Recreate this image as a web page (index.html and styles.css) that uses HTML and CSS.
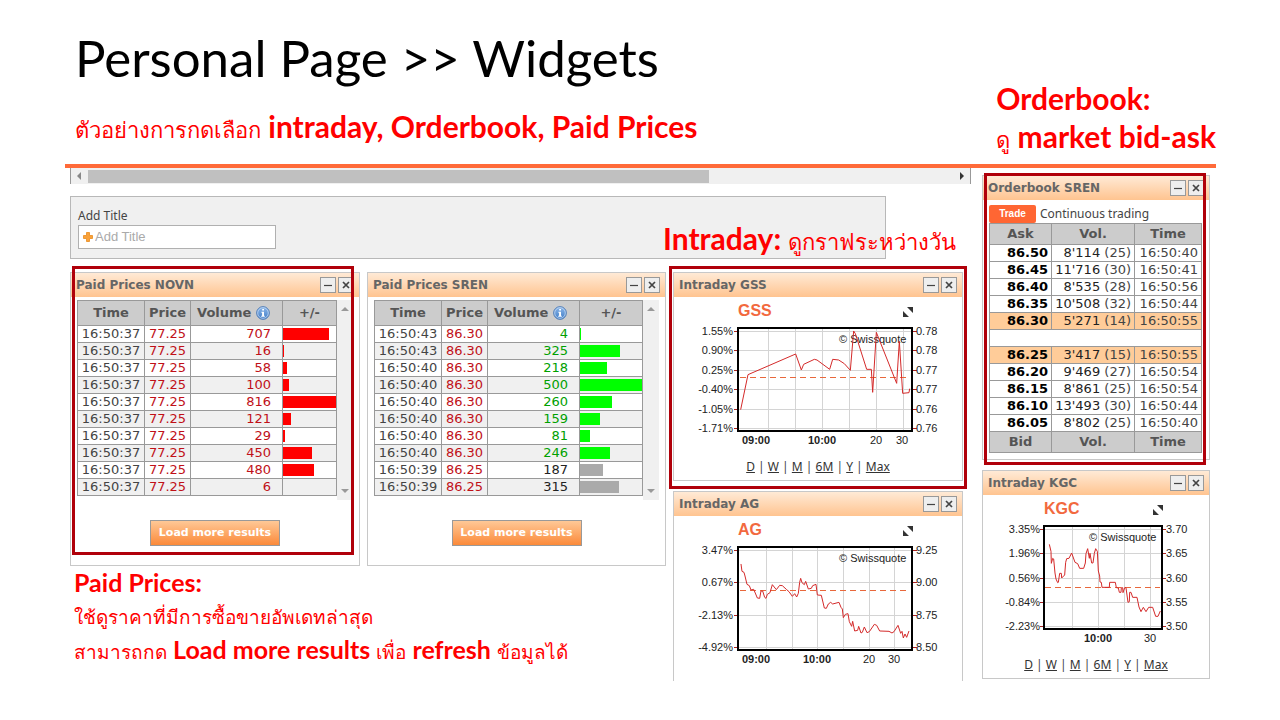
FILE: index.html
```html
<!DOCTYPE html>
<html lang="th">
<head>
<meta charset="utf-8">
<title>Personal Page &gt;&gt; Widgets</title>
<link rel="stylesheet" href="styles.css">
</head>
<body>
<svg class="defs" width="0" height="0" aria-hidden="true">
  <defs>
    <linearGradient id="blue" x1="0" y1="0" x2="0" y2="1"><stop offset="0" stop-color="#8db8ea"/><stop offset="1" stop-color="#3f7cc6"/></linearGradient>
    <symbol id="info" viewBox="0 0 14 14"><circle cx="7" cy="7" r="6.4" fill="url(#blue)" stroke="#5a83b8"/><circle cx="7" cy="7" r="5.3" fill="none" stroke="#cfe0f5" stroke-width=".7"/><path d="M6.2 3h1.8v1.6H6.2zM5.4 5.7H8v4.1h.8v1H5.2v-1h.9V6.7h-.7z" fill="#fff"/></symbol>
    <symbol id="min" viewBox="0 0 14 14"><path d="M3 7.5h8" stroke="#444" stroke-width="1.2"/></symbol>
    <symbol id="close" viewBox="0 0 14 14"><path d="M4 4l6 6M10 4l-6 6" stroke="#444" stroke-width="1.7"/></symbol>
  </defs>
</svg>
<main class="slide">
  <header class="head">
    <div class="titles">
      <h1>Personal Page &gt;&gt; Widgets</h1>
      <p class="note"><span class="th">ตัวอย่างการกดเลือก</span> intraday, Orderbook, Paid Prices</p>
    </div>
    <p class="note side-note">Orderbook:<br><span class="th">ดู</span> market bid-ask</p>
  </header>

  <div class="board">
    <div class="left">
      <div class="scroll"><span class="arrow left-arrow"></span><span class="thumb"></span><span class="arrow right-arrow"></span></div>
      <div class="add">
        <label for="add-title">Add Title</label>
        <div class="field">
          <svg width="10" height="10" viewBox="0 0 10 10"><path d="M3.5.5h3v3h3v3h-3v3h-3v-3h-3v-3h3z" fill="#f9a13a" stroke="#e88a1c" stroke-width=".8"/></svg>
          <input id="add-title" type="text" placeholder="Add Title">
        </div>
        <p class="note intraday-note">Intraday: <span class="th">ดูกราฟระหว่างวัน</span></p>
      </div>

      <div class="columns">
        <div class="prices">
          <section class="panel marked mark-novn">
            <div class="bar"><h2>Paid Prices NOVN</h2><button aria-label="Minimize"><svg><use href="#min"/></svg></button><button aria-label="Close"><svg><use href="#close"/></svg></button></div>
            <div class="list">
              <table class="paid down">
                <thead><tr><th class="c-time">Time</th><th class="c-price">Price</th><th class="c-vol">Volume <svg class="info"><use href="#info"/></svg></th><th>+/-</th></tr></thead>
                <tbody>
                  <tr><td>16:50:37</td><td>77.25</td><td>707</td><td><i style="width:86%"></i></td></tr>
                  <tr><td>16:50:37</td><td>77.25</td><td>16</td><td><i style="width:2%"></i></td></tr>
                  <tr><td>16:50:37</td><td>77.25</td><td>58</td><td><i style="width:8%"></i></td></tr>
                  <tr><td>16:50:37</td><td>77.25</td><td>100</td><td><i style="width:12%"></i></td></tr>
                  <tr><td>16:50:37</td><td>77.25</td><td>816</td><td><i style="width:100%"></i></td></tr>
                  <tr><td>16:50:37</td><td>77.25</td><td>121</td><td><i style="width:15%"></i></td></tr>
                  <tr><td>16:50:37</td><td>77.25</td><td>29</td><td><i style="width:4%"></i></td></tr>
                  <tr><td>16:50:37</td><td>77.25</td><td>450</td><td><i style="width:55%"></i></td></tr>
                  <tr><td>16:50:37</td><td>77.25</td><td>480</td><td><i style="width:59%"></i></td></tr>
                  <tr><td>16:50:37</td><td>77.25</td><td>6</td><td></td></tr>
                </tbody>
              </table>
              <div class="vscroll"><span class="up-arrow"></span><span class="down-arrow"></span></div>
            </div>
            <button class="more">Load more results</button>
          </section>

          <section class="panel">
            <div class="bar"><h2>Paid Prices SREN</h2><button aria-label="Minimize"><svg><use href="#min"/></svg></button><button aria-label="Close"><svg><use href="#close"/></svg></button></div>
            <div class="list">
              <table class="paid up">
                <thead><tr><th class="c-time">Time</th><th class="c-price">Price</th><th class="c-vol">Volume <svg class="info"><use href="#info"/></svg></th><th>+/-</th></tr></thead>
                <tbody>
                  <tr><td>16:50:43</td><td>86.30</td><td>4</td><td><i style="width:2%"></i></td></tr>
                  <tr><td>16:50:43</td><td>86.30</td><td>325</td><td><i style="width:65%"></i></td></tr>
                  <tr><td>16:50:40</td><td>86.30</td><td>218</td><td><i style="width:44%"></i></td></tr>
                  <tr><td>16:50:40</td><td>86.30</td><td>500</td><td><i style="width:100%"></i></td></tr>
                  <tr><td>16:50:40</td><td>86.30</td><td>260</td><td><i style="width:52%"></i></td></tr>
                  <tr><td>16:50:40</td><td>86.30</td><td>159</td><td><i style="width:32%"></i></td></tr>
                  <tr><td>16:50:40</td><td>86.30</td><td>81</td><td><i style="width:16%"></i></td></tr>
                  <tr><td>16:50:40</td><td>86.30</td><td>246</td><td><i style="width:49%"></i></td></tr>
                  <tr class="flat"><td>16:50:39</td><td>86.25</td><td>187</td><td><i style="width:37%"></i></td></tr>
                  <tr class="flat"><td>16:50:39</td><td>86.25</td><td>315</td><td><i style="width:63%"></i></td></tr>
                </tbody>
              </table>
              <div class="vscroll"><span class="up-arrow"></span><span class="down-arrow"></span></div>
            </div>
            <button class="more">Load more results</button>
          </section>

          <div class="paid-note">
            <p class="note">Paid Prices:</p>
            <p class="note small"><span class="th">ใช้ดูราคาที่มีการซื้อขายอัพเดทล่าสุด</span></p>
            <p class="note small"><span class="th">สามารถกด</span> Load more results <span class="th">เพื่อ</span> refresh <span class="th">ข้อมูลได้</span></p>
          </div>
        </div>

        <div class="stack">
          <section class="panel marked mark-gss">
            <div class="bar"><h2>Intraday GSS</h2><button aria-label="Minimize"><svg><use href="#min"/></svg></button><button aria-label="Close"><svg><use href="#close"/></svg></button></div>
            <svg class="chart" viewBox="0 0 288 154">
              <text class="sym" x="64" y="19">GSS</text>
              <path class="expand" d="M233 10h6v6zM229 14v6h6z"/>
              <path class="grid" d="M64 34.500h175M64 53.500h175M64 73.500h175M64 92.500h175M64 112.500h175M64 131.500h175M94.500 31v103M121.500 31v103M148.500 31v103M175.500 31v103M202.500 31v103M229.500 31v103"/>
              <path class="tick" d="M60 34.500h4M60 53.500h4M60 73.500h4M60 92.500h4M60 112.500h4M60 131.500h4M239 34.500h4M239 53.500h4M239 73.500h4M239 92.500h4M239 112.500h4M239 131.500h4"/>
              <path class="base" d="M66 80.500h169"/>
              <text class="ax" x="165" y="46">© Swissquote</text>
              <g transform="scale(.33333) translate(-27 -24)"><path class="line" d="M227 362L249 257L392 195L409 243L416 226L448 211L456 213L494 241L503 211L521 213L538 224L556 244L566 126L571 134L605 241L619 241L623 310L634 130L695 283L703 157L713 313L732 311L734 299"/></g>
              <rect class="frame" x="64" y="31" width="174" height="103"/>
              <g class="ax end"><text x="59" y="38">1.55%</text><text x="59" y="57">0.90%</text><text x="59" y="77">0.25%</text><text x="59" y="96">-0.40%</text><text x="59" y="116">-1.05%</text><text x="59" y="135">-1.71%</text></g>
              <g class="ax"><text x="242" y="38">0.78</text><text x="242" y="57">0.78</text><text x="242" y="77">0.77</text><text x="242" y="96">0.77</text><text x="242" y="116">0.76</text><text x="242" y="135">0.76</text></g>
              <g class="ax mid"><text class="b" x="82" y="147">09:00</text><text class="b" x="148" y="147">10:00</text><text x="202" y="147">20</text><text x="228" y="147">30</text></g>
            </svg>
            <nav class="range"><a href="#">D</a> | <a href="#">W</a> | <a href="#">M</a> | <a href="#">6M</a> | <a href="#">Y</a> | <a href="#">Max</a></nav>
          </section>

          <section class="panel cut">
            <div class="bar"><h2>Intraday AG</h2><button aria-label="Minimize"><svg><use href="#min"/></svg></button><button aria-label="Close"><svg><use href="#close"/></svg></button></div>
            <svg class="chart" viewBox="0 0 288 154">
              <text class="sym" x="64" y="19">AG</text>
              <path class="expand" d="M233 10h6v6zM229 14v6h6z"/>
              <path class="grid" d="M64 34.500h175M64 66.500h175M64 99.500h175M64 131.500h175M92.500 31v103M118.500 31v103M143.500 31v103M169.500 31v103M195.500 31v103M220.500 31v103"/>
              <path class="tick" d="M60 34.500h4M60 66.500h4M60 99.500h4M60 131.500h4M239 34.500h4M239 66.500h4M239 99.500h4M239 131.500h4"/>
              <path class="base" d="M66 74.500h169"/>
              <text class="ax" x="165" y="46">© Swissquote</text>
              <g transform="scale(.33333) translate(-27 -96)"><path class="line" d="M228 240L231 262L237 265L240 276L246 301L253 305L258 318L266 316L272 330L277 342L284 343L288 321L293 321L299 340L303 343L307 331L315 326L322 302L334 317L344 304L352 305L364 316L372 323L382 337L389 329L395 339L400 328L404 295L407 283L411 296L418 302L422 292L430 315L439 313L443 305L453 301L457 333L469 334L478 372L484 373L490 360L497 355L503 360L522 355L528 370L532 375L535 401L541 391L549 389L553 413L560 427L563 412L569 441L578 439L581 427L588 447L592 445L598 429L606 446L613 443L628 421L635 424L644 441L672 442L681 447L687 443L699 424L707 448L711 442L715 462L720 450L725 460L732 441"/></g>
              <rect class="frame" x="64" y="31" width="174" height="103"/>
              <g class="ax end"><text x="59" y="38">3.47%</text><text x="59" y="70">0.67%</text><text x="59" y="103">-2.13%</text><text x="59" y="135">-4.92%</text></g>
              <g class="ax"><text x="242" y="38">9.25</text><text x="242" y="70">9.00</text><text x="242" y="103">8.75</text><text x="242" y="135">8.50</text></g>
              <g class="ax mid"><text class="b" x="82" y="147">09:00</text><text class="b" x="143" y="147">10:00</text><text x="195" y="147">20</text><text x="220" y="147">30</text></g>
            </svg>
          </section>
        </div>
      </div>
    </div>

    <aside class="right">
      <section class="panel marked mark-book">
        <div class="bar"><h2>Orderbook SREN</h2><button aria-label="Minimize"><svg><use href="#min"/></svg></button><button aria-label="Close"><svg><use href="#close"/></svg></button></div>
        <div class="status"><button class="trade">Trade</button><span>Continuous trading</span></div>
        <table class="book">
          <thead><tr><th class="b-price">Ask</th><th class="b-vol">Vol.</th><th>Time</th></tr></thead>
          <tbody>
            <tr><td>86.50</td><td><b>8'114</b> (25)</td><td>16:50:40</td></tr>
            <tr><td>86.45</td><td><b>11'716</b> (30)</td><td>16:50:41</td></tr>
            <tr><td>86.40</td><td><b>8'535</b> (28)</td><td>16:50:56</td></tr>
            <tr><td>86.35</td><td><b>10'508</b> (32)</td><td>16:50:44</td></tr>
            <tr class="best"><td>86.30</td><td><b>5'271</b> (14)</td><td>16:50:55</td></tr>
            <tr><td colspan="3"></td></tr>
            <tr class="best"><td>86.25</td><td><b>3'417</b> (15)</td><td>16:50:55</td></tr>
            <tr><td>86.20</td><td><b>9'469</b> (27)</td><td>16:50:54</td></tr>
            <tr><td>86.15</td><td><b>8'861</b> (25)</td><td>16:50:54</td></tr>
            <tr><td>86.10</td><td><b>13'493</b> (30)</td><td>16:50:44</td></tr>
            <tr><td>86.05</td><td><b>8'802</b> (25)</td><td>16:50:40</td></tr>
          </tbody>
          <tfoot><tr><th>Bid</th><th>Vol.</th><th>Time</th></tr></tfoot>
        </table>
      </section>

      <section class="panel">
        <div class="bar"><h2>Intraday KGC</h2><button aria-label="Minimize"><svg><use href="#min"/></svg></button><button aria-label="Close"><svg><use href="#close"/></svg></button></div>
        <svg class="chart" viewBox="0 0 226 154">
          <text class="sym" x="61" y="19">KGC</text>
          <path class="expand" d="M174 10h6v6zM170 14v6h6z"/>
          <path class="grid" d="M61 34.500h118M61 58.500h118M61 83.500h118M61 107.500h118M61 131.500h118M89.500 31v103M115.500 31v103M141.500 31v103M167.500 31v103"/>
          <path class="tick" d="M57 34.500h4M57 58.500h4M57 83.500h4M57 107.500h4M57 131.500h4M179 34.500h4M179 58.500h4M179 83.500h4M179 107.500h4M179 131.500h4"/>
          <path class="base" d="M62 92.500h115"/>
          <text class="ax" x="106" y="46">© Swissquote</text>
          <g transform="scale(.33333) translate(-24 -93)"><path class="line" d="M223 241L228 262L229 298L233 283L236 285L240 327L243 345L248 356L250 355L254 328L259 328L260 342L269 333L272 295L275 284L282 283L290 267L300 295L308 299L314 313L326 313L331 297L333 269L338 254L343 283L345 268L350 297L354 297L358 268L362 254L367 262L370 321L374 336L375 354L379 355L381 370L403 370L404 355L421 355L424 371L430 372L433 385L438 385L439 371L443 371L444 386L449 371L453 371L459 415L463 413L464 385L468 385L473 400L486 400L492 429L498 443L505 430L513 443L521 430L533 430L542 457L549 457L556 441"/></g>
          <rect class="frame" x="61" y="31" width="118" height="103"/>
          <g class="ax end"><text x="57" y="38">3.35%</text><text x="57" y="62">1.96%</text><text x="57" y="87">0.56%</text><text x="57" y="111">-0.84%</text><text x="57" y="135">-2.23%</text></g>
          <g class="ax"><text x="183" y="38">3.70</text><text x="183" y="62">3.65</text><text x="183" y="87">3.60</text><text x="183" y="111">3.55</text><text x="183" y="135">3.50</text></g>
          <g class="ax mid"><text class="b" x="115" y="147">10:00</text><text x="167" y="147">30</text></g>
        </svg>
        <nav class="range"><a href="#">D</a> | <a href="#">W</a> | <a href="#">M</a> | <a href="#">6M</a> | <a href="#">Y</a> | <a href="#">Max</a></nav>
      </section>
    </aside>
  </div>
</main>
</body>
</html>
```
FILE: styles.css
```css
* { box-sizing: border-box; }
body { margin: 0; background: #fff; color: #444; font: 12px/16px "DejaVu Sans", sans-serif; }
h1, h2, p { margin: 0; }
button { font: inherit; cursor: pointer; }
.defs { position: absolute; }
.slide { padding: 0 64px 0 65px; }

.head { display: flex; justify-content: space-between; padding: 22px 0 0 10px; min-height: 164px; }
h1 { font: 400 51px/72px Lato, sans-serif; color: #000; white-space: nowrap; }
.note { color: #f00; font: 700 30px/38px Lato, sans-serif; white-space: nowrap; }
.th { font-weight: 400; font-size: 22px; }
.titles .note { margin-top: 13px; }
.side-note { padding-top: 57px; }

.board { display: flex; gap: 11px; padding: 0 6px 0 5px; border-top: 4px solid #ff6a39; }
.left { flex: 901 1 0; min-width: 0; }
.right { flex: 228 1 0; min-width: 0; display: flex; flex-direction: column; gap: 10px; padding-top: 7px; }

.scroll { display: flex; align-items: center; justify-content: space-between; height: 16px; background: #f0f0f0; border: solid #999; border-width: 0 1px; padding: 0 6px; }
.thumb { flex: 0 0 70%; height: 13px; background: #c0c0c0; margin-right: auto; margin-left: 7px; }
.arrow { border: solid transparent; border-width: 4px 0; }
.left-arrow { border-right: 4px solid #888; }
.right-arrow { border-left: 4px solid #333; }

.add { position: relative; width: 90.6%; margin-top: 12px; padding: 10px 7px 9px; background: #f0f0f0; border: 1px solid #b8b8b8; }
.add label { display: block; font: 12px/18px "Noto Sans", sans-serif; }
.field { position: relative; width: 198px; }
.field svg { position: absolute; left: 5px; top: 7px; }
.field input { display: block; width: 100%; height: 24px; padding: 0 0 2px 16px; border: 1px solid #b0b0b0; background: #fff; font: 13px "Liberation Sans", sans-serif; }
.field input::placeholder { color: #aaa; }
.intraday-note { position: absolute; left: 592px; top: 22px; }

.columns { display: flex; gap: 7px; margin-top: 13px; padding-right: 8px; }
.prices { flex: 596 1 0; display: grid; grid-template-columns: 290fr 299fr; column-gap: 7px; align-content: start; }
.stack { flex: 290 1 0; display: flex; flex-direction: column; gap: 10px; }

.panel { position: relative; border: 1px solid #c8c8c8; background: #fff; }
.panel.cut { border-bottom: 0; height: 190px; }
.marked::after { content: ""; position: absolute; border: 3px solid #b0000a; pointer-events: none; }
.mark-novn::after { inset: -7px 5px 10px 1px; }
.mark-gss::after { inset: -7px -5px -9px; }
.mark-book::after { inset: -3px 3px -6px 1px; }
.bar { display: flex; align-items: center; gap: 2px; height: 24px; padding: 0 5px; background: linear-gradient(#ffead6, #ffc490); }
.bar h2 { flex: 1; font: 700 12px/16px "DejaVu Sans", sans-serif; color: #666; white-space: nowrap; }
.bar button { width: 16px; height: 16px; padding: 0; border: 1px solid #999; background: #eee; }
.bar button svg { display: block; width: 14px; height: 14px; }

.list { display: flex; padding: 3px 6px 0; height: 203px; align-items: flex-start; }
table { border-collapse: collapse; table-layout: fixed; color: #444; }
th, td { border: 1px solid #999; padding: 0; height: 17px; font-size: 13px; line-height: 16px; white-space: nowrap; }
th { background: #ccc; color: #555; }
.paid { flex: 1; width: 0; }
.paid th { height: 25px; }
.c-time { width: 67px; }
.c-price { width: 46px; }
.c-vol { width: 92px; }
.info { width: 14px; height: 14px; vertical-align: -3px; margin: 0 6px 0 0; }
.paid td { text-align: center; }
.paid td:nth-child(2) { color: #c01018; }
.paid td:nth-child(3) { text-align: right; padding-right: 11px; }
.paid td:nth-child(4) { padding: 0; }
.paid tbody tr:nth-child(even) { background: #f0f0f0; }
.paid i { display: block; height: 12px; }
.down td:nth-child(3) { color: #c01018; }
.down i { background: #f00; }
.up td:nth-child(3) { color: #00a000; }
.up i { background: #0f0; }
.up .flat td:nth-child(3) { color: #222; }
.up .flat i { background: #aaa; }
.vscroll { display: flex; flex-direction: column; justify-content: space-between; align-items: center; width: 16px; height: 200px; padding: 7px 0; background: #f0f0f0; }
.up-arrow, .down-arrow { border: solid transparent; border-width: 0 4px; }
.up-arrow { border-bottom: 4px solid #999; }
.down-arrow { border-top: 4px solid #999; }
.more { display: block; margin: 20px auto 19px; width: 130px; height: 26px; padding: 0; border: 1px solid #999; background: linear-gradient(#ffc896, #fb8a3a); color: #fff; font-weight: 700; font-size: 11px; }

.paid-note { grid-column: 1 / -1; padding-left: 4px; }
.paid-note .note { font-size: 25px; line-height: 32px; }
.paid-note .small .th { font-size: 19px; }

.chart { display: block; width: 100%; height: auto; font-family: "Liberation Sans", sans-serif; }
.sym { font-size: 16px; font-weight: 700; fill: #f2693e; }
.ax { font-size: 11px; fill: #222; }
.end { text-anchor: end; }
.mid { text-anchor: middle; }
.b { font-weight: 700; }
.grid { stroke: #d4d4d4; }
.tick { stroke: #a22; }
.base { stroke: #e8683c; stroke-dasharray: 6 4; }
.line { fill: none; stroke: #d42a2a; vector-effect: non-scaling-stroke; }
.frame { fill: none; stroke: #000; stroke-width: 2; }
.expand { fill: #333; }
.range { padding: 8px 0 5px; text-align: center; font: 12px/16px "Noto Sans", sans-serif; }
.range a { color: #333; }

.status { display: flex; align-items: center; gap: 4px; padding: 4px 6px 0; font: 12px/19px "Noto Sans", sans-serif; }
.trade { width: 47px; height: 18px; padding: 0; border: 0; border-radius: 2px; background: #ff6633; color: #fff; font: 700 10px "Liberation Sans", sans-serif; }
.book { width: calc(100% - 13px); margin: 0 7px 6px 6px; }
.book th { height: 21px; }
.b-price { width: 62px; }
.b-vol { width: 83px; }
.book td { text-align: right; padding-right: 3px; }
.book td:first-child { color: #000; font-weight: 700; }
.book b { color: #222; font-weight: 400; }
.best { background: #ffcc99; }
```
